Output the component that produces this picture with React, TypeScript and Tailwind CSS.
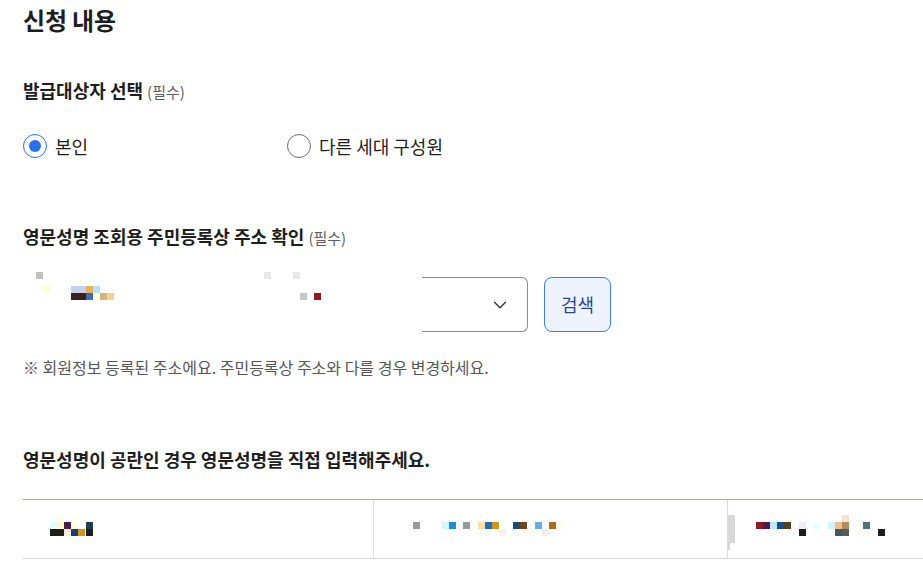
import { ChevronDown } from 'lucide-react';

type Cell = [number, number, string, number?];

// Redacted (pixelated) fragments: [x, y, colour, width] relative to the box they sit in
const addressCells: Cell[] = [
    [13, -5, '#c0c0c0'],
    [241, -5, '#e8e8e8'],
    [270, -5, '#e8e8e8'],
    [20, 9, '#ffffcc'],
    [48, 9, '#c4d0ec', 15],
    [63, 9, '#ecb060'],
    [70, 9, '#b0e4fc'],
    [48, 16, '#3e1e1e', 15],
    [63, 16, '#3e6ea6'],
    [70, 16, '#ffffd8'],
    [77, 16, '#dcb084'],
    [84, 16, '#f8d090'],
    [277, 16, '#c8c8c8'],
    [291, 16, '#901c1c'],
];

const nameCells: Cell[] = [
    [34, 15, '#fffde8'],
    [48, 15, '#fffff0'],
    [27, 22, '#dffcff'],
    [34, 22, '#fffacd'],
    [41, 22, '#4e1a52'],
    [48, 22, '#fffde0'],
    [63, 22, '#1d3d52'],
    [27, 29, '#1e1e1e', 14],
    [41, 29, '#ffeecf'],
    [48, 29, '#1b3e66'],
    [55, 29, '#d4951f'],
    [63, 29, '#1e1e1e'],
];

const middleCells: Cell[] = [
    [39, 22, '#9a9a9a'],
    [68, 22, '#ccfaff'],
    [75, 22, '#1e8fd0'],
    [89, 22, '#9a9a9a'],
    [104, 22, '#ffdfa8'],
    [111, 22, '#1e6fb8'],
    [118, 22, '#d0951f'],
    [139, 22, '#1d4a6e'],
    [146, 22, '#6b4420'],
    [161, 22, '#62aee8'],
    [175, 22, '#b06a20'],
    [182, 22, '#fffde8'],
    [125, 29, '#fff0f0'],
    [168, 29, '#f0f0f0'],
];

const rightCells: Cell[] = [
    [0, 15, '#d8d8d8', 7],
    [0, 22, '#d8d8d8', 7],
    [0, 29, '#d8d8d8', 7],
    [0, 36, '#d8d8d8', 7],
    [0, 43, '#d8d8d8', 2],
    [114, 15, '#f5e2d0'],
    [28, 22, '#8e1c20'],
    [35, 22, '#4e1a52'],
    [42, 22, '#b8ecfc'],
    [49, 22, '#1e4a8e'],
    [56, 22, '#5a3e1e'],
    [71, 22, '#f0ecf2'],
    [85, 22, '#e8feff'],
    [100, 22, '#cdf6ff'],
    [107, 22, '#f0c08a'],
    [114, 22, '#b88a5e'],
    [135, 22, '#4e7282'],
    [71, 29, '#1e1e1e'],
    [107, 29, '#3e5a5a'],
    [114, 29, '#5a5a5a'],
    [135, 29, '#fff8f0'],
    [150, 29, '#1e1e1e'],
];

function Mosaic({ cells, width, height }: { cells: Cell[]; width: number; height: number }) {
    return (
        <svg width={width} height={height} overflow="visible" className="block shrink-0">
            {cells.map(([x, y, fill, w], i) => (
                <rect key={i} x={x} y={y} width={w ?? 7} height={7} fill={fill} />
            ))}
        </svg>
    );
}

function Radio({ label, checked }: { label: string; checked?: boolean }) {
    return (
        <label className="flex items-center gap-[8px] cursor-pointer">
            <span
                className={`w-[24px] h-[24px] rounded-full flex items-center justify-center border-[1.5px] ${checked ? 'border-[#2b6ff0]' : 'border-[#6e6e6e]'}`}
            >
                {checked && <span className="w-[12px] h-[12px] rounded-full bg-[#2b6ff0]" />}
            </span>
            <span className="text-[18px] leading-[24px] text-[#1e1e1e]">{label}</span>
        </label>
    );
}

export default function App() {
    return (
        <div
            className="min-h-screen bg-white pl-[23px] pt-[4px] text-[#1e1e1e] overflow-hidden"
            style={{ fontFamily: '"Noto Sans CJK KR", "Noto Sans", sans-serif' }}
        >
            {/* Title */}
            <h2 className="text-[24px] font-bold leading-[32px] tracking-[-0.2px]">신청 내용</h2>

            {/* 발급대상자 */}
            <div className="mt-[42px] text-[18px] font-bold leading-[24px]">
                발급대상자 선택 <span className="text-[15px] font-normal text-[#5f5f5f]">(필수)</span>
            </div>
            <div className="mt-[30px] grid grid-cols-[264px_1fr]">
                <Radio label="본인" checked />
                <Radio label="다른 세대 구성원" />
            </div>

            {/* 주소 확인 */}
            <div className="mt-[66px] text-[18px] font-bold leading-[24px]">
                영문성명 조회용 주민등록상 주소 확인 <span className="text-[15px] font-normal text-[#5f5f5f]">(필수)</span>
            </div>
            <div className="mt-[27px] flex items-stretch h-[55px]">
                <Mosaic cells={addressCells} width={399} height={55} />
                <div className="w-[106px] border border-l-0 border-[#8a8a8a] rounded-r-[6px] flex items-center justify-end pr-[16px]">
                    <ChevronDown className="w-[22px] h-[22px] text-[#333]" strokeWidth={1.5} />
                </div>
                <button className="ml-[16px] w-[67px] border border-[#3d7ee8] bg-[#eef4ff] rounded-[8px] text-[18px] text-[#2a4490]">
                    검색
                </button>
            </div>
            <p className="mt-[24px] text-[16px] leading-[22px] text-[#555]">
                ※ 회원정보 등록된 주소에요. 주민등록상 주소와 다를 경우 변경하세요.
            </p>

            {/* 영문성명 */}
            <div className="mt-[69px] text-[18px] font-bold leading-[24px]">
                영문성명이 공란인 경우 영문성명을 직접 입력해주세요.
            </div>
            <div className="mt-[28px] flex h-[60px] border-t border-t-[#a0aebb] border-b border-b-[#d5d5d5]">
                <div className="w-[351px] border-r border-[#dcdcdc]">
                    <Mosaic cells={nameCells} width={351} height={58} />
                </div>
                <div className="w-[354px] border-r border-[#dcdcdc]">
                    <Mosaic cells={middleCells} width={353} height={58} />
                </div>
                <div className="flex-1">
                    <Mosaic cells={rightCells} width={194} height={58} />
                </div>
            </div>
        </div>
    );
}
